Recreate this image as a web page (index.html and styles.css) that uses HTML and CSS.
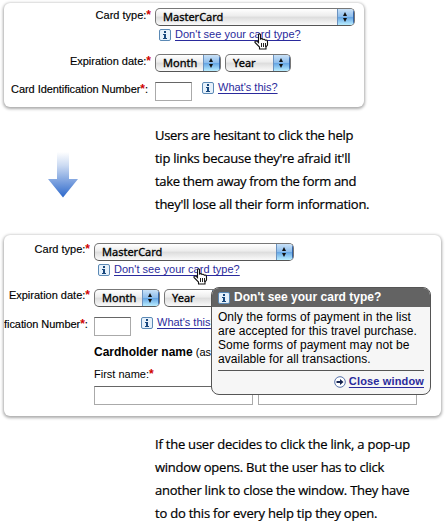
FILE: index.html
```html
<!DOCTYPE html>
<html lang="en">
<head>
<meta charset="utf-8">
<title>Help tip links</title>
<link rel="stylesheet" href="styles.css">
</head>
<body>
<svg class="defs" width="0" height="0" aria-hidden="true">
  <defs>
    <linearGradient id="fade" x1="0" y1="0" x2="0" y2="1"><stop offset="0" stop-color="#fff"/><stop offset=".3" stop-color="#cbdaf2"/><stop offset="1" stop-color="#2c68cb"/></linearGradient>
    <symbol id="info" viewBox="0 0 12 12"><rect x=".5" y=".5" width="11" height="11" rx="1.5" fill="#e6f1fb" stroke="#5b89b5"/><path d="M5 2h2v2H5zM4 5h3v4h1v1H4V9h1V6H4z" fill="#17477d"/></symbol>
    <symbol id="hand" viewBox="0 0 15 17"><path d="M4.500 1.500Q5.500 .2 6.500 1.500V6Q8 5 9 6.500Q10.500 5.700 11.300 7.200Q13.500 6.500 13.500 9V12L12 14V16H5.500V14L1 9.500Q.5 7.500 3 8.200L4.500 9.700Z" fill="#fff" stroke="#111" stroke-width="1.100"/><path d="M7.500 10v4M9.500 10v4M11.500 10v4" stroke="#222" fill="none"/></symbol>
  </defs>
</svg>
<section class="panel panel-top">
  <div class="form">
    <div class="label">Card type:<b class="req">*</b></div>
    <div class="select card"><span>MasterCard</span><i class="cap"></i></div>
    <div class="tip"><svg class="info"><use href="#info"/></svg><a class="link type">Don't see your card type?</a><svg class="hand"><use href="#hand"/></svg></div>
    <div class="label">Expiration date:<b class="req">*</b></div>
    <div class="pair"><div class="select"><span>Month</span><i class="cap"></i></div><div class="select"><span>Year</span><i class="cap"></i></div></div>
    <div class="label cin">Card Identification Number<b class="req">*</b>:</div>
    <div class="idrow"><div class="input"></div><svg class="info"><use href="#info"/></svg><a class="link what">What's this?</a></div>
  </div>
</section>
<div class="middle">
  <svg class="arrow" viewBox="0 0 30 46"><path d="M9 0H21V27H30L15 45.500L0 27H9Z" fill="url(#fade)"/></svg>
  <p class="caption"><span class="l1">Users are hesitant to click the help</span><span class="l2">tip links because they're afraid it'll</span><span class="l3">take them away from the form and</span><span class="l4">they'll lose all their form information.</span></p>
</div>
<section class="panel panel-bottom">
  <div class="clip">
    <div class="form narrow">
      <div class="label">Card type:<b class="req">*</b></div>
      <div class="select card"><span>MasterCard</span><i class="cap"></i></div>
      <div class="tip"><svg class="info"><use href="#info"/></svg><a class="link type">Don't see your card type?</a><svg class="hand"><use href="#hand"/></svg></div>
      <div class="label">Expiration date:<b class="req">*</b></div>
      <div class="pair"><div class="select"><span>Month</span><i class="cap"></i></div><div class="select"><span>Year</span><i class="cap"></i></div></div>
      <div class="label cin">fication Number<b class="req">*</b>:</div>
      <div class="idrow"><div class="input"></div><svg class="info"><use href="#info"/></svg><a class="link what">What's this?</a></div>
    </div>
    <div class="holder">
      <div class="holder-title"><b>Cardholder name</b> (as</div>
      <div class="first">First name:<b class="req">*</b></div>
      <div class="names"><div class="field"></div><div class="field"></div></div>
    </div>
  </div>
  <aside class="popup">
    <header class="popup-head"><svg class="info"><use href="#info"/></svg><b>Don't see your card type?</b></header>
    <div class="popup-body">
      <p class="message"><span>Only the forms of payment in the list</span><span>are accepted for this travel purchase.</span><span>Some forms of payment may not be</span><span>available for all transactions.</span></p>
      <footer class="close"><svg class="go" viewBox="0 0 12 12"><circle cx="6" cy="6" r="5.300" fill="#fff" stroke="#5570a8"/><path d="M2.500 5H6V3L9.500 6L6 9V7H2.500Z" fill="#14234f"/></svg><a class="link">Close window</a></footer>
    </div>
  </aside>
</section>
<p class="caption last"><span class="l5">If the user decides to click the link, a pop-up</span><span class="l6">window opens. But the user has to click</span><span class="l7">another link to close the window. They have</span><span class="l8">to do this for every help tip they open.</span></p>
</body>
</html>
```

FILE: styles.css
```css
* { box-sizing: border-box; }
body {
  margin: 0;
  padding: 3px 0 0 4px;
  width: 445px;
  height: 525px;
  overflow: hidden;
  background: #fff;
  color: #000;
  font: 12px/14px "Liberation Sans", Arial, sans-serif;
}
p { margin: 0; }
svg { display: block; flex: none; }
.defs { position: absolute; }

.panel {
  border-radius: 6px;
  background: #fff;
  box-shadow: 0 1px 3px 1px rgba(0, 0, 0, .33);
}
.panel-top { width: 360px; height: 104px; padding-top: 5px; }
.panel-bottom { position: relative; width: 437px; height: 181px; }
.clip { height: 181px; padding-top: 8px; overflow: hidden; border-radius: 6px; }

.form {
  display: grid;
  grid-template-columns: 147px 200px;
  grid-template-rows: 18px 28px 18px 10px 20px;
  column-gap: 4px;
  font-size: 11px;
}
.narrow { grid-template-columns: 86px 200px; }
.label { text-align: right; white-space: nowrap; -webkit-text-stroke: .15px; }
.narrow .label { margin-top: -1px; }
.cin { grid-row: 5; letter-spacing: -.06px; padding-right: 3px; }
.narrow .cin { margin-top: 0; }
.req { color: #d00000; font-size: 12px; letter-spacing: 0; line-height: 10px; -webkit-text-stroke: 0; }
.tip { grid-column: 2; position: relative; display: flex; gap: 4px; padding: 3px 0 0 4px; }
.info { width: 12px; height: 12px; }
.link { color: #2a2a9c; text-decoration: underline; text-underline-offset: 2px; white-space: nowrap; }
.tip .link { margin-top: -2px; }
.hand { position: absolute; left: 99px; top: 7px; width: 15px; height: 17px; }

.select {
  display: flex;
  justify-content: space-between;
  width: 66px;
  height: 18px;
  overflow: hidden;
  border: 1px solid #777;
  border-bottom-color: #555;
  border-radius: 5px;
  background: linear-gradient(#fff, #ececec 45%, #dcdcdc 50%, #fafafa);
  font: 400 11px/16px "Noto Sans", sans-serif;
  -webkit-text-stroke: .3px;
}
.select span { padding-left: 7px; }
.select.card { width: 200px; }
.cap {
  position: relative;
  width: 17px;
  border-left: 1px solid #6b92bf;
  background: linear-gradient(#c9e1f7, #8dbdec 48%, #65a5e3 52%, #b9edff);
  box-shadow: inset -1px 0 #3465a8;
}
.cap::before, .cap::after {
  content: "";
  position: absolute;
  left: 5px;
  border: solid transparent;
  border-width: 0 2.5px;
}
.cap::before { top: 3px; border-bottom: 4px solid #111; }
.cap::after { top: 9px; border-top: 4px solid #111; }
.pair { display: flex; gap: 4px; }

.idrow { grid-row: 5; display: flex; }
.input { width: 37px; height: 19px; border: 1px solid #aaa; border-top-color: #666; }
.idrow .info { margin-left: 10px; }
.idrow .link { margin: -2px 0 0 4px; }
.type { letter-spacing: .03px; }

.middle { display: flex; height: 128px; }
.arrow { width: 30px; height: 46px; margin: 45px 0 0 44px; }
.caption {
  font: 400 13px/23px "Open Sans", sans-serif;
  -webkit-text-stroke: .2px;
}
.caption span { display: block; width: max-content; }
.l1 { letter-spacing: -.29px; }
.l2 { letter-spacing: -.26px; }
.l3 { letter-spacing: -.32px; }
.l4, .l6, .l7 { letter-spacing: -.25px; }
.l5, .l8 { letter-spacing: -.22px; }
.middle .caption { margin: 17px 0 0 77px; }
.last { margin: 17px 0 0 151px; }

.holder { margin: 8px 0 0 90px; }
.holder-title { white-space: nowrap; font-size: 11px; }
.holder-title b { font-size: 12px; }
.first { margin-top: 8px; font-size: 11px; }
.names { display: flex; gap: 5px; margin-top: 5px; }
.field { width: 159px; height: 19px; border: 1px solid #aaa; border-top-color: #666; }

.popup {
  position: absolute;
  left: 207px;
  top: 52px;
  width: 220px;
  height: 108px;
  overflow: hidden;
  border: 1px solid #555;
  border-radius: 8px;
  background: #f6f6f6;
}
.popup-head {
  display: flex;
  gap: 4px;
  height: 19px;
  padding: 4px 0 0 6px;
  background: #636363;
  color: #fff;
}
.popup-head b { margin-top: -2px; white-space: nowrap; letter-spacing: .02px; }
.popup-body { padding: 3px 6px 0; }
.message span { display: block; width: max-content; letter-spacing: .04px; }
.close {
  display: flex;
  justify-content: flex-end;
  gap: 3px;
  margin-top: 4px;
  padding-top: 5px;
  border-top: 1px solid #555;
}
.go { width: 12px; height: 12px; }
.close .link { margin-top: -2px; font-weight: bold; font-size: 11px; letter-spacing: .15px; }
```
